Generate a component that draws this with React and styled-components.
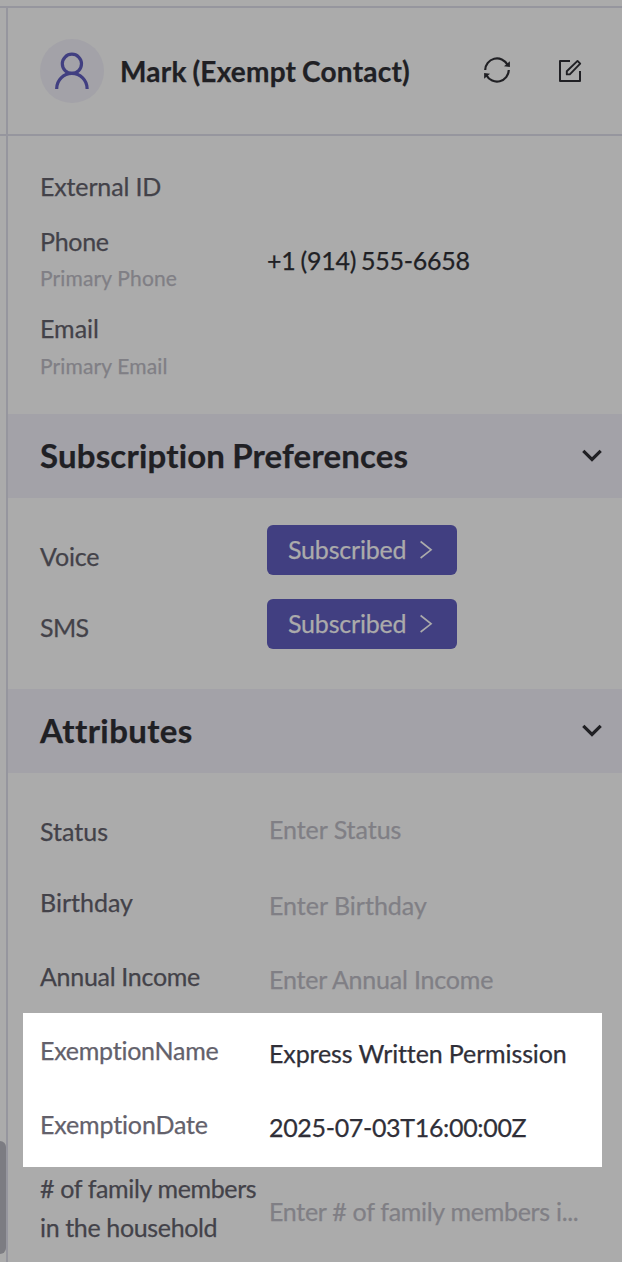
import React from 'react'
import styled, { createGlobalStyle } from 'styled-components'

const GlobalStyle = createGlobalStyle`
* {
    box-sizing: border-box;
}
body {
    margin: 0;
    background: #ababab;
    font-family: 'Lato', sans-serif;
    font-size: 25px;
    font-variant-ligatures: none;
    -webkit-text-stroke: 0.25px currentColor;
    color: #202024;
}
`

const Page = styled.div`
width: 622px;
height: 1262px;
overflow: hidden;
display: flex;
flex-direction: column;
`

const TopStrip = styled.div`
height: 8px;
flex: none;
border-bottom: 2px solid #96969e;
`

const Body = styled.div`
flex: 1;
display: flex;
`

const Gutter = styled.div`
width: 6px;
`

const GutterHead = styled.div`
height: 128px;
border-bottom: 2px solid #96969e;
`

const ScrollThumb = styled.div`
height: 113px;
margin-top: 1005px;
border-radius: 0 6px 6px 0;
background: #7c7c82;
`

const Panel = styled.main`
flex: 1;
min-width: 0;
border-left: 2px solid #96969e;
`

const Header = styled.header`
height: 128px;
padding: 0 38px 0 32px;
display: flex;
align-items: center;
border-bottom: 2px solid #96969e;
`

const Avatar = styled.div`
width: 64px;
height: 64px;
border-radius: 50%;
background: #a3a2a8;
`

const Name = styled.h1`
flex: 1;
margin: 0 0 0 16px;
font-size: 28px;
line-height: 40px;
font-weight: 700;
letter-spacing: 0.22px;
word-spacing: -1.2px;
white-space: nowrap;
`

const IconButton = styled.button`
width: 26px;
height: 26px;
margin: 0 0 2px 48px;
padding: 0;
border: none;
background: none;
color: #202024;

svg {
    display: block;
}
`

const Info = styled.section`
height: 278px;
padding: 35px 32px 0;
display: grid;
grid-template-columns: 227px 1fr;
grid-template-rows: 55px 87px 87px;
`

const Label = styled.div`
color: #434249;
line-height: 30px;
letter-spacing: ${props => props.$track ?? -0.15}px;
`

const Hint = styled.div`
margin-top: ${props => props.$gap || 8}px;
color: #807f85;
font-size: 21px;
line-height: 28px;
letter-spacing: 0.15px;
`

const PhoneNumber = styled.div`
padding-top: 19px;
line-height: 30px;
letter-spacing: -0.25px;
word-spacing: -1.2px;
`

const SectionHead = styled.div`
height: 84px;
padding: 0 20px 2px 32px;
display: flex;
align-items: center;
justify-content: space-between;
background: #a3a2a8;

svg {
    margin-top: ${props => props.$drop || 1}px;
}
`

const SectionTitle = styled.h2`
margin: 0;
font-size: 33px;
line-height: 40px;
font-weight: 700;
letter-spacing: ${props => props.$track ?? 0.18}px;
word-spacing: -1.2px;
`

const Preferences = styled.section`
height: 191px;
padding: 27px 32px 0;
`

const Preference = styled.div`
height: 74px;
display: grid;
grid-template-columns: 227px 1fr;

${Label} {
    padding-top: ${props => props.$labelTop}px;
}
`

const SubscribeButton = styled.button`
width: 190px;
height: 50px;
padding: 0 24px 0 21px;
display: flex;
align-items: center;
justify-content: space-between;
border: none;
border-radius: 6px;
background: #413f81;
color: #ababab;
font-family: inherit;
font-size: 25px;
line-height: 30px;
letter-spacing: -0.2px;

span {
    margin-top: -2px;
}
`

const Attributes = styled.section`
padding-top: 20px;
`

const Attribute = styled.div`
height: ${props => props.$height || 74}px;
padding-left: 32px;
display: grid;
grid-template-columns: 229px 320px;
`

const AttributeLabel = styled(Label)`
padding-top: ${props => props.$top}px;
line-height: ${props => props.$line || 30}px;
`

const AttributeValue = styled.div`
padding-top: ${props => props.$top}px;
line-height: 30px;
letter-spacing: ${props => props.$track ?? -0.05}px;
color: #807f85;
white-space: nowrap;
`

const Highlight = styled.div`
width: 579px;
height: 154px;
margin-left: 15px;
padding-top: 2px;
background: #fff;

${Attribute} {
    padding-left: 17px;
}
${AttributeLabel} {
    color: #63616b;
}
${AttributeValue} {
    color: #302f38;
}
`

const UserIcon = () => (
  <svg width="64" height="64" viewBox="0 0 64 64" fill="none" stroke="#413f81" strokeWidth="3.2">
    <circle cx="31.9" cy="24.8" r="9.6" />
    <path d="M16.7 50V49.6A15.2 15.2 0 0 1 47.1 49.6V50" />
  </svg>
)

const RefreshIcon = () => (
  <svg width="26" height="26" viewBox="0 0 26 26" fill="none" stroke="currentColor" strokeWidth="2.2">
    <path d="M1.2 13A11.8 11.8 0 0 1 23.4 7.6" />
    <path d="M24.8 13A11.8 11.8 0 0 1 2.6 18.4" />
    <path d="M25.9 4.2V9.9L20 9.2Z" fill="currentColor" stroke="none" />
    <path d="M.1 21.8V16.1L6 16.8Z" fill="currentColor" stroke="none" />
  </svg>
)

const EditIcon = () => (
  <svg width="26" height="26" viewBox="0 0 26 26" fill="none" stroke="currentColor" strokeWidth="2" strokeLinejoin="round">
    <path d="M12 4H2V24H22V14" />
    <path d="M8.8 17.4V14.2L19.5 3.9L22.2 6.7L11.8 17.4Z" strokeWidth="1.9" />
  </svg>
)

const ChevronDown = () => (
  <svg width="20" height="14" viewBox="0 0 20 14" fill="none" stroke="#202024" strokeWidth="3.2">
    <path d="M1.3 1.9L10 10.4L18.7 1.9" />
  </svg>
)

const ChevronRight = () => (
  <svg width="13" height="20" viewBox="0 0 13 20" fill="none" stroke="currentColor" strokeWidth="1.6">
    <path d="M.6 1.5L11.1 9.8L.6 18" />
  </svg>
)

const App = () => {
  return (
    <Page>
        <GlobalStyle />
        <TopStrip />
        <Body>
        <Gutter>
            <GutterHead />
            <ScrollThumb />
        </Gutter>
        <Panel>
            <Header>
                <Avatar><UserIcon /></Avatar>
                <Name>Mark (Exempt Contact)</Name>
                <IconButton aria-label="Refresh"><RefreshIcon /></IconButton>
                <IconButton aria-label="Edit"><EditIcon /></IconButton>
            </Header>
            <Info>
                <Label>External ID</Label>
                <div />
                <div>
                    <Label $track={-0.3}>Phone</Label>
                    <Hint>Primary Phone</Hint>
                </div>
                <PhoneNumber>+1 (914) 555-6658</PhoneNumber>
                <div>
                    <Label $track={0}>Email</Label>
                    <Hint $gap={9}>Primary Email</Hint>
                </div>
            </Info>
            <SectionHead>
                <SectionTitle>Subscription Preferences</SectionTitle>
                <ChevronDown />
            </SectionHead>
            <Preferences>
                <Preference $labelTop={16}>
                    <Label>Voice</Label>
                    <SubscribeButton><span>Subscribed</span> <ChevronRight /></SubscribeButton>
                </Preference>
                <Preference $labelTop={13}>
                    <Label $track={-0.6}>SMS</Label>
                    <SubscribeButton><span>Subscribed</span> <ChevronRight /></SubscribeButton>
                </Preference>
            </Preferences>
            <SectionHead $drop={2}>
                <SectionTitle $track={0.4}>Attributes</SectionTitle>
                <ChevronDown />
            </SectionHead>
            <Attributes>
                <Attribute>
                    <AttributeLabel $top={23} $track={0}>Status</AttributeLabel>
                    <AttributeValue $top={21}>Enter Status</AttributeValue>
                </Attribute>
                <Attribute>
                    <AttributeLabel $top={20} $track={0}>Birthday</AttributeLabel>
                    <AttributeValue $top={23} $track={0}>Enter Birthday</AttributeValue>
                </Attribute>
                <Attribute $height={72}>
                    <AttributeLabel $top={20} $track={-0.3}>Annual Income</AttributeLabel>
                    <AttributeValue $top={23} $track={-0.2}>Enter Annual Income</AttributeValue>
                </Attribute>
                <Highlight>
                    <Attribute>
                        <AttributeLabel $top={20} $track={-0.25}>ExemptionName</AttributeLabel>
                        <AttributeValue $top={23} $track={-0.12}>Express Written Permission</AttributeValue>
                    </Attribute>
                    <Attribute>
                        <AttributeLabel $top={20} $track={-0.15}>ExemptionDate</AttributeLabel>
                        <AttributeValue $top={23} $track={-0.33}>2025-07-03T16:00:00Z</AttributeValue>
                    </Attribute>
                </Highlight>
                <Attribute $height={95}>
                    <AttributeLabel $top={2} $line={39} $track={-0.36}># of family members in the household</AttributeLabel>
                    <AttributeValue $top={29} $track={-0.29}>Enter # of family members i...</AttributeValue>
                </Attribute>
            </Attributes>
        </Panel>
        </Body>
    </Page>
  )
}

export default App
